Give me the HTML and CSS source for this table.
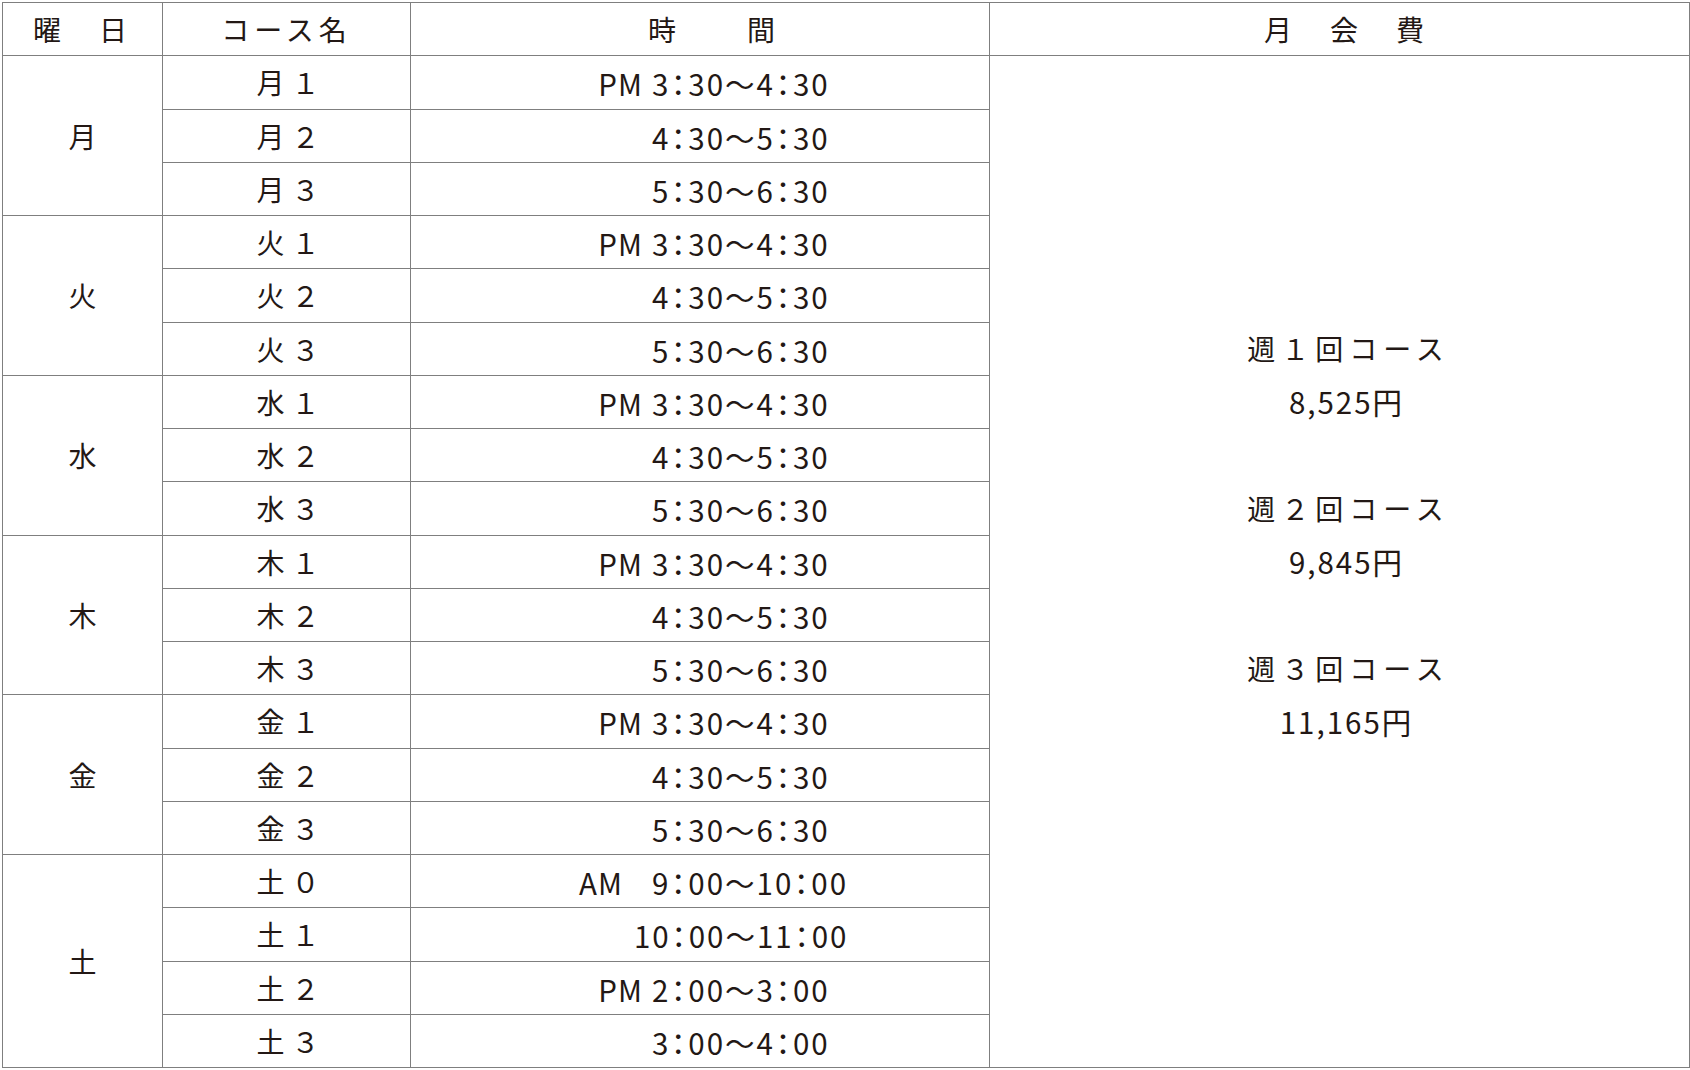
FILE: index.html
```html
<!DOCTYPE html>
<html lang="ja">
<head>
<meta charset="utf-8">
<title>コース表</title>
<link rel="stylesheet" href="styles.css">
</head>
<body>
<table class="schedule">
  <colgroup>
    <col class="c-day"><col class="c-course"><col class="c-time"><col class="c-fee">
  </colgroup>
  <thead>
    <tr>
      <th class="h-day">曜　日</th>
      <th class="h-course">コース名</th>
      <th class="h-time">時　　間</th>
      <th class="h-fee">月　会　費</th>
    </tr>
  </thead>
  <tbody>
    <tr>
      <td class="day" rowspan="3">月</td>
      <td class="course">月１</td>
      <td class="time"><span class="pre">PM</span><span class="t">3<span class="c">：</span>30～4<span class="c">：</span>30</span></td>
      <td class="fee" rowspan="19">
        <div class="fee-lines">
          <div class="fl">週１回コース</div>
          <div class="fl amt">8,525円</div>
          <div class="fl"></div>
          <div class="fl">週２回コース</div>
          <div class="fl amt">9,845円</div>
          <div class="fl"></div>
          <div class="fl">週３回コース</div>
          <div class="fl amt">11,165円</div>
          <div class="fl"></div>
        </div>
      </td>
    </tr>
    <tr><td class="course">月２</td><td class="time"><span class="pre"></span><span class="t">4<span class="c">：</span>30～5<span class="c">：</span>30</span></td></tr>
    <tr><td class="course">月３</td><td class="time"><span class="pre"></span><span class="t">5<span class="c">：</span>30～6<span class="c">：</span>30</span></td></tr>

    <tr><td class="day" rowspan="3">火</td><td class="course">火１</td><td class="time"><span class="pre">PM</span><span class="t">3<span class="c">：</span>30～4<span class="c">：</span>30</span></td></tr>
    <tr><td class="course">火２</td><td class="time"><span class="pre"></span><span class="t">4<span class="c">：</span>30～5<span class="c">：</span>30</span></td></tr>
    <tr><td class="course">火３</td><td class="time"><span class="pre"></span><span class="t">5<span class="c">：</span>30～6<span class="c">：</span>30</span></td></tr>

    <tr><td class="day" rowspan="3">水</td><td class="course">水１</td><td class="time"><span class="pre">PM</span><span class="t">3<span class="c">：</span>30～4<span class="c">：</span>30</span></td></tr>
    <tr><td class="course">水２</td><td class="time"><span class="pre"></span><span class="t">4<span class="c">：</span>30～5<span class="c">：</span>30</span></td></tr>
    <tr><td class="course">水３</td><td class="time"><span class="pre"></span><span class="t">5<span class="c">：</span>30～6<span class="c">：</span>30</span></td></tr>

    <tr><td class="day" rowspan="3">木</td><td class="course">木１</td><td class="time"><span class="pre">PM</span><span class="t">3<span class="c">：</span>30～4<span class="c">：</span>30</span></td></tr>
    <tr><td class="course">木２</td><td class="time"><span class="pre"></span><span class="t">4<span class="c">：</span>30～5<span class="c">：</span>30</span></td></tr>
    <tr><td class="course">木３</td><td class="time"><span class="pre"></span><span class="t">5<span class="c">：</span>30～6<span class="c">：</span>30</span></td></tr>

    <tr><td class="day" rowspan="3">金</td><td class="course">金１</td><td class="time"><span class="pre">PM</span><span class="t">3<span class="c">：</span>30～4<span class="c">：</span>30</span></td></tr>
    <tr><td class="course">金２</td><td class="time"><span class="pre"></span><span class="t">4<span class="c">：</span>30～5<span class="c">：</span>30</span></td></tr>
    <tr><td class="course">金３</td><td class="time"><span class="pre"></span><span class="t">5<span class="c">：</span>30～6<span class="c">：</span>30</span></td></tr>

    <tr><td class="day" rowspan="4">土</td><td class="course">土０</td><td class="time"><span class="pre pre-am">AM</span><span class="t">9<span class="c">：</span>00～10<span class="c">：</span>00</span></td></tr>
    <tr><td class="course">土１</td><td class="time"><span class="pre"></span><span class="t t-wide">10<span class="c">：</span>00～11<span class="c">：</span>00</span></td></tr>
    <tr><td class="course">土２</td><td class="time"><span class="pre">PM</span><span class="t">2<span class="c">：</span>00～3<span class="c">：</span>00</span></td></tr>
    <tr><td class="course">土３</td><td class="time"><span class="pre"></span><span class="t">3<span class="c">：</span>00～4<span class="c">：</span>00</span></td></tr>
  </tbody>
</table>
</body>
</html>
```

FILE: styles.css
```css
html, body {
  margin: 0;
  padding: 0;
  background: #ffffff;
}

body {
  font-family: "Noto Sans CJK JP", "Noto Sans", sans-serif;
  color: #231815;
}

.schedule {
  border-collapse: collapse;
  margin: 2px 0 0 2px;
  width: 1687px;
  table-layout: fixed;
  font-size: 28px;
}

.c-day { width: 160px; }
.c-course { width: 248px; }
.c-time { width: 579px; }
.c-fee { width: 700px; }

.schedule th,
.schedule td {
  border: 1px solid #7f7f7f;
  height: 52.25px;
  padding: 0;
  text-align: center;
  vertical-align: middle;
  font-weight: 400;
  line-height: 1;
}

.schedule th {
  letter-spacing: 5px;
}

.schedule .h-time { padding-left: 28px; }
.schedule .h-fee { padding-left: 14px; }

.schedule .course {
  letter-spacing: 7px;
  padding-left: 10px;
}

.schedule .time {
  text-align: left;
  white-space: nowrap;
}

.pre {
  display: inline-block;
  width: 232px;
  padding-right: 9px;
  text-align: right;
  font-size: 29.5px;
  letter-spacing: 1px;
  vertical-align: middle;
}

.pre.pre-am {
  width: 212px;
  padding-right: 29px;
}

.t {
  display: inline-block;
  font-size: 29.5px;
  letter-spacing: 2px;
  vertical-align: middle;
}

.t.t-wide {
  margin-left: -18px;
}

.c {
  font-feature-settings: "halt" 1;
  margin: 0 0.6px;
}

.schedule .fee {
  padding-left: 12px;
}

.fee-lines {
  display: flex;
  flex-direction: column;
  align-items: center;
}

.fl {
  height: 53.25px;
  line-height: 53.25px;
  letter-spacing: 6px;
  padding-left: 6px;
}

.fl.amt {
  font-size: 29.5px;
  letter-spacing: 2px;
  padding-left: 2px;
}
```
